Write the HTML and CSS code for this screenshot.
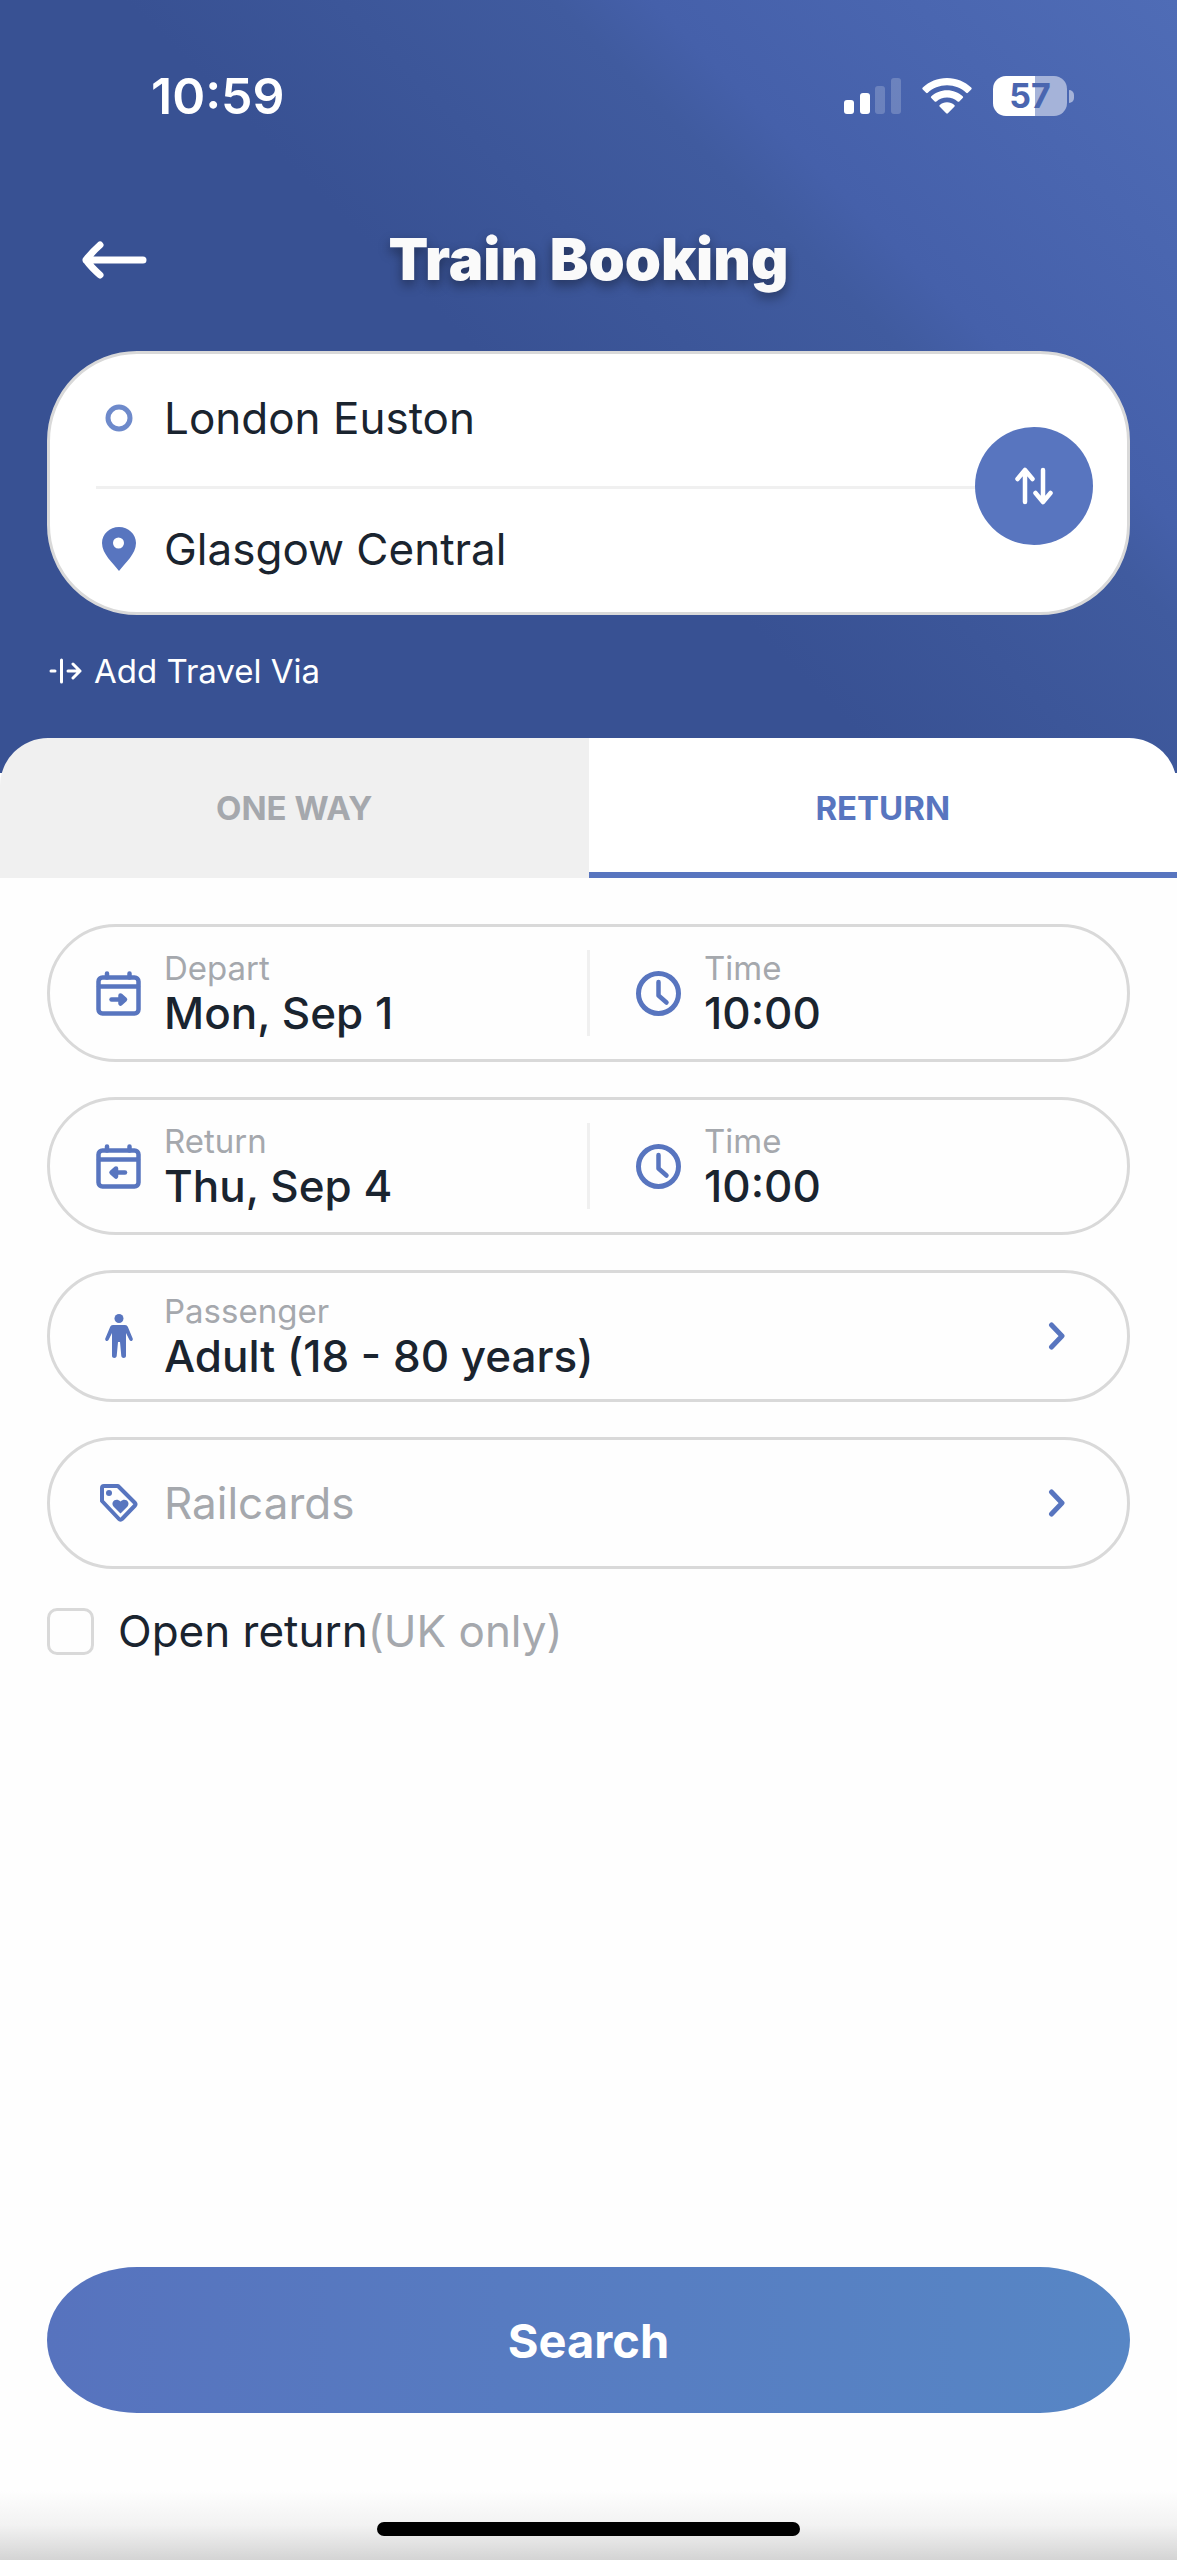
FILE: index.html
```
<!DOCTYPE html>
<html lang="en">
<head>
  <meta charset="UTF-8">
  <meta name="viewport" content="width=device-width, initial-scale=1.0">
  <title>Train Booking</title>
  <link rel="stylesheet" href="styles.css">
</head>
<body>
  <header class="hero">
    <div class="status-bar">
      <span class="status-time">10:59</span>
      <div class="status-icons">
        <svg width="57" height="36" viewBox="0 0 57 36" fill="#fff" aria-hidden="true">
          <rect x="0" y="22" width="10" height="14" rx="3"/>
          <rect x="16" y="15" width="10" height="21" rx="3"/>
          <rect x="31" y="8" width="10" height="28" rx="3" opacity="0.2"/>
          <rect x="47" y="0" width="10" height="36" rx="3" opacity="0.2"/>
        </svg>
        <svg width="50" height="36" viewBox="0 0 50 36" fill="#fff" aria-hidden="true">
          <path d="M25 0C15.500 0 7 3.700 .8 9.600a1.200 1.200 0 0 0 0 1.800l3.300 3.300a1.200 1.200 0 0 0 1.700 0C10.800 10 17.500 7.200 25 7.200S39.200 10 44.200 14.700a1.200 1.200 0 0 0 1.700 0l3.300-3.300a1.200 1.200 0 0 0 0-1.800C43 3.700 34.500 0 25 0z"/>
          <path d="M25 12.200c-6.100 0-11.600 2.300-15.700 6.100a1.200 1.200 0 0 0 0 1.800l3.400 3.300a1.200 1.200 0 0 0 1.700 0C17.200 20.900 20.900 19.400 25 19.400s7.800 1.500 10.600 4a1.200 1.200 0 0 0 1.700 0l3.400-3.300a1.200 1.200 0 0 0 0-1.800C36.600 14.500 31.100 12.200 25 12.200z"/>
          <path d="M25 24.300c-2.800 0-5.300 1-7.200 2.700a1.100 1.100 0 0 0 0 1.700l6.400 6.500a1.200 1.200 0 0 0 1.700 0l6.400-6.500a1.100 1.100 0 0 0 0-1.700C30.300 25.300 27.800 24.300 25 24.300z"/>
        </svg>
        <span class="battery">57</span>
      </div>
    </div>

    <div class="title-bar">
      <button type="button" class="back-btn" aria-label="Back">
        <svg width="66" height="40" viewBox="0 0 66 40" fill="none" stroke="#fff" stroke-width="7" stroke-linecap="round" stroke-linejoin="round">
          <path d="M62 20H5M19 5Q10 13 5 20q5 7 14 15"/>
        </svg>
      </button>
      <h1>Train Booking</h1>
    </div>

    <div class="route-card">
      <button type="button" class="station">
        <span class="field-icon">
          <svg width="28" height="28" viewBox="0 0 28 28" fill="none" stroke="#6e8acb" stroke-width="5"><circle cx="14" cy="14" r="11"/></svg>
        </span>
        London Euston
      </button>
      <button type="button" class="station">
        <span class="field-icon">
          <svg width="34" height="44" viewBox="0 0 34 44" fill="#5875bf"><path fill-rule="evenodd" d="M17 0C7.600 0 0 7 0 16c0 11 11 20 17 28 6-8 17-17 17-28C34 7 26.400 0 17 0zm-.500 10.500a5.500 5.500 0 1 1 0 11 5.500 5.500 0 0 1 0-11z"/></svg>
        </span>
        Glasgow Central
      </button>
      <button type="button" class="swap-btn" aria-label="Swap stations">
        <svg width="38" height="38" viewBox="0 0 38 38" fill="none" stroke="#fff" stroke-width="4.500" stroke-linecap="round" stroke-linejoin="round">
          <path d="M10 35V3M2.500 12L10 3l7.500 9M28 3v32M20.500 26l7.500 9 7.500-9"/>
        </svg>
      </button>
    </div>

    <button type="button" class="via-btn">
      <svg width="33" height="26" viewBox="0 0 33 26" fill="none" stroke="#fff" stroke-width="3" stroke-linecap="round" stroke-linejoin="round">
        <path d="M2 13h4M12.500 2v22M19 13h12M24 6l7 7-7 7"/>
      </svg>
      Add Travel Via
    </button>
  </header>

  <main class="panel">
    <div class="tabs" role="tablist">
      <button type="button" class="tab" role="tab">ONE WAY</button>
      <button type="button" class="tab active" role="tab" aria-selected="true">RETURN</button>
    </div>

    <form class="booking-form">
      <div class="field split">
        <button type="button" class="field-part">
          <span class="field-icon">
            <svg width="45" height="45" viewBox="0 0 45 45" fill="none" stroke="#5875bf" stroke-width="4.500" stroke-linecap="round" stroke-linejoin="round">
              <rect x="2.500" y="6.500" width="40" height="36" rx="4"/>
              <path d="M3 15.500h39M11 2.500v4M33.500 2.500v4"/>
              <path d="M15.500 28.500H25"/>
              <path fill="#5875bf" d="M24.500 24.500l4.500 4-4.500 4z"/>
            </svg>
          </span>
          <span class="field-text"><small>Depart</small>Mon, Sep 1</span>
        </button>
        <button type="button" class="field-part">
          <span class="field-icon">
            <svg width="45" height="45" viewBox="0 0 45 45" fill="none" stroke="#5875bf" stroke-width="5" stroke-linecap="round" stroke-linejoin="round">
              <circle cx="22.500" cy="22.500" r="20"/>
              <path stroke-width="4.500" d="M22.500 11v13.500l8 7"/>
            </svg>
          </span>
          <span class="field-text"><small>Time</small>10:00</span>
        </button>
      </div>

      <div class="field split">
        <button type="button" class="field-part">
          <span class="field-icon">
            <svg width="45" height="45" viewBox="0 0 45 45" fill="none" stroke="#5875bf" stroke-width="4.500" stroke-linecap="round" stroke-linejoin="round">
              <rect x="2.500" y="6.500" width="40" height="36" rx="4"/>
              <path d="M3 15.500h39M11 2.500v4M33.500 2.500v4"/>
              <path d="M29 28.500h-9"/>
              <path fill="#5875bf" d="M20 24.500l-4.500 4 4.500 4z"/>
            </svg>
          </span>
          <span class="field-text"><small>Return</small>Thu, Sep 4</span>
        </button>
        <button type="button" class="field-part">
          <span class="field-icon">
            <svg width="45" height="45" viewBox="0 0 45 45" fill="none" stroke="#5875bf" stroke-width="5" stroke-linecap="round" stroke-linejoin="round">
              <circle cx="22.500" cy="22.500" r="20"/>
              <path stroke-width="4.500" d="M22.500 11v13.500l8 7"/>
            </svg>
          </span>
          <span class="field-text"><small>Time</small>10:00</span>
        </button>
      </div>

      <button type="button" class="field single">
        <span class="field-icon">
          <svg width="28" height="44" viewBox="0 0 28 44" fill="#5875bf">
            <circle cx="14" cy="4.500" r="4.500"/>
            <path d="M8 11h12c1.500 0 2.400.8 2.900 2l4.800 11.500c.7 2.200-2 3.500-3.200 1.500L21 19v23c0 2.500-4.500 2.500-4.700 0L15 28h-2l-1.300 14c-.2 2.500-4.700 2.500-4.700 0V19l-3.500 7c-1.200 2-3.900.7-3.200-1.500L5.100 13c.5-1.200 1.400-2 2.900-2z"/>
          </svg>
        </span>
        <span class="field-text"><small>Passenger</small>Adult (18 - 80 years)</span>
        <svg class="chevron" width="18" height="30" viewBox="0 0 18 30" fill="none" stroke="#5875bf" stroke-width="5" stroke-linecap="round" stroke-linejoin="round"><path d="M3.500 4L14 15 3.500 26"/></svg>
      </button>

      <button type="button" class="field single">
        <span class="field-icon">
          <svg width="38" height="38" viewBox="0 0 38 38" fill="none" stroke="#5875bf" stroke-width="4" stroke-linejoin="round">
            <path d="M4 2h14l17 17a2 2 0 0 1 0 2.500L22 35a2 2 0 0 1-3 0L2 17V4a2 2 0 0 1 2-2z"/>
            <circle cx="9" cy="9" r="3" fill="#5875bf" stroke="none"/>
            <path fill="#5875bf" stroke="none" d="M20.500 29.500l-7-7c-3.500-4.500 2.500-9.500 7-5 4.500-4.500 10.500.5 7 5z"/>
          </svg>
        </span>
        <span class="field-text placeholder">Railcards</span>
        <svg class="chevron" width="18" height="30" viewBox="0 0 18 30" fill="none" stroke="#5875bf" stroke-width="5" stroke-linecap="round" stroke-linejoin="round"><path d="M3.500 4L14 15 3.500 26"/></svg>
      </button>

      <div class="check-row">
        <input type="checkbox" id="open-return" name="open-return">
        <label for="open-return">Open return<span class="hint">(UK only)</span></label>
      </div>

      <button type="submit" class="search-btn">Search</button>
    </form>
  </main>

  <footer class="home-bar"><span class="home-indicator"></span></footer>
</body>
</html>
```
FILE: styles.css
```
* {
  box-sizing: border-box;
}

body {
  display: flex;
  flex-direction: column;
  min-height: 100vh;
  margin: 0;
  font-family: Inter, "Liberation Sans", sans-serif;
  font-size: 44px;
  color: #1a242f;
  background-color: #fefefe;
}

button {
  padding: 0;
  border: none;
  background: none;
  font: inherit;
  color: inherit;
  text-align: left;
  cursor: pointer;
}

svg {
  display: block;
  flex: none;
}

/* header */
.hero {
  padding: 66px 47px 80px;
  color: #fff;
  background: linear-gradient(225deg, #4f6cb6 0%, #4560aa 27%, #405b9f 32%, #385193 54%);
}

.status-bar {
  display: flex;
  justify-content: space-between;
  align-items: center;
  height: 60px;
  padding: 0 56px 0 104px;
}

.status-time {
  font-size: 50px;
  font-weight: 600;
}

.status-icons {
  display: flex;
  align-items: center;
  gap: 21px;
}

.battery {
  position: relative;
  width: 74px;
  height: 40px;
  margin-right: 7px;
  border-radius: 13px;
  font-size: 34px;
  font-weight: 700;
  line-height: 40px;
  text-align: center;
  color: #4a66b0;
  background: linear-gradient(to right, #fff 57%, #a5b3d9 57%);
}

.battery::after {
  content: "";
  position: absolute;
  top: 14px;
  right: -7px;
  width: 5px;
  height: 13px;
  border-radius: 0 5px 5px 0;
  background-color: #a5b3d9;
}

.title-bar {
  display: grid;
  grid-template-columns: 66px 1fr 66px;
  align-items: center;
  margin: 92px 34px 50px;
}

h1 {
  margin: 0;
  font-size: 58px;
  font-weight: 900;
  line-height: 83px;
  text-align: center;
  color: #fafafa;
  text-shadow: 0 5px 12px rgba(0, 0, 0, 0.4);
}

.route-card {
  position: relative;
  padding: 0 46px;
  border: 3px solid #d9d9d9;
  border-radius: 90px;
  color: #1a242f;
  background-color: #fff;
}

.station {
  display: flex;
  align-items: center;
  gap: 23px;
  width: 100%;
  height: 132px;
  padding-bottom: 4px;
}

.station + .station {
  height: 126px;
  border-top: 3px solid #f0f0f0;
}

.field-icon {
  display: flex;
  flex: none;
  justify-content: center;
  width: 45px;
}

.swap-btn {
  position: absolute;
  top: 73px;
  right: 34px;
  display: flex;
  justify-content: center;
  align-items: center;
  width: 118px;
  height: 118px;
  border-radius: 50%;
  background-color: #5875bf;
}

.via-btn {
  display: flex;
  align-items: center;
  gap: 12px;
  margin-top: 34px;
  padding-left: 2px;
  font-size: 33px;
  line-height: 44px;
}

/* tabs */
.panel {
  display: flex;
  flex: 1;
  flex-direction: column;
  margin-top: -35px;
}

.tabs {
  display: flex;
  height: 140px;
  border-radius: 48px 48px 0 0;
  overflow: hidden;
}

.tab {
  flex: 1;
  font-size: 33px;
  font-weight: 700;
  text-align: center;
  color: #a5a8ad;
  background-color: #f0f0f0;
}

.tab.active {
  color: #5875bf;
  background-color: #fff;
  box-shadow: inset 0 -6px #5875bf;
}

/* form */
.booking-form {
  display: flex;
  flex: 1;
  flex-direction: column;
  gap: 35px;
  padding: 46px 47px 60px;
}

.field {
  display: flex;
  align-items: center;
  border: 3px solid #d9d9d9;
  border-radius: 70px;
  font-weight: 500;
}

.split {
  height: 138px;
}

.field-part {
  display: flex;
  flex: 1;
  align-items: center;
  gap: 23px;
  height: 86px;
  padding-left: 46px;
}

.field-part + .field-part {
  border-left: 3px solid #f0f0f0;
}

.single {
  gap: 23px;
  height: 132px;
  padding: 0 61px 0 46px;
}

.field-text {
  line-height: 50px;
}

.field-text small {
  display: block;
  font-size: 33px;
  font-weight: 400;
  line-height: 40px;
  color: #a5a8ad;
}

.placeholder {
  font-weight: 400;
  color: #a5a8ad;
}

.chevron {
  margin-left: auto;
}

.check-row {
  display: flex;
  align-items: center;
  gap: 24px;
}

.check-row input {
  appearance: none;
  width: 47px;
  height: 47px;
  margin: 0;
  border: 3px solid #d9d9d9;
  border-radius: 10px;
}

.hint {
  color: #a5a8ad;
}

.search-btn {
  height: 146px;
  margin-top: auto;
  border-radius: 90px / 73px;
  font-size: 47px;
  font-weight: 700;
  text-align: center;
  color: #fff;
  background: linear-gradient(to right, #5773be, #5786c5);
}

/* bottom bar */
.home-bar {
  display: flex;
  justify-content: center;
  align-items: center;
  height: 87px;
  padding-top: 24px;
  background: linear-gradient(to bottom, #fefefe 20%, #f2f2f2 60%, #d4d4d4);
}

.home-indicator {
  width: 36%;
  height: 14px;
  border-radius: 7px;
  background-color: #000;
}
```
